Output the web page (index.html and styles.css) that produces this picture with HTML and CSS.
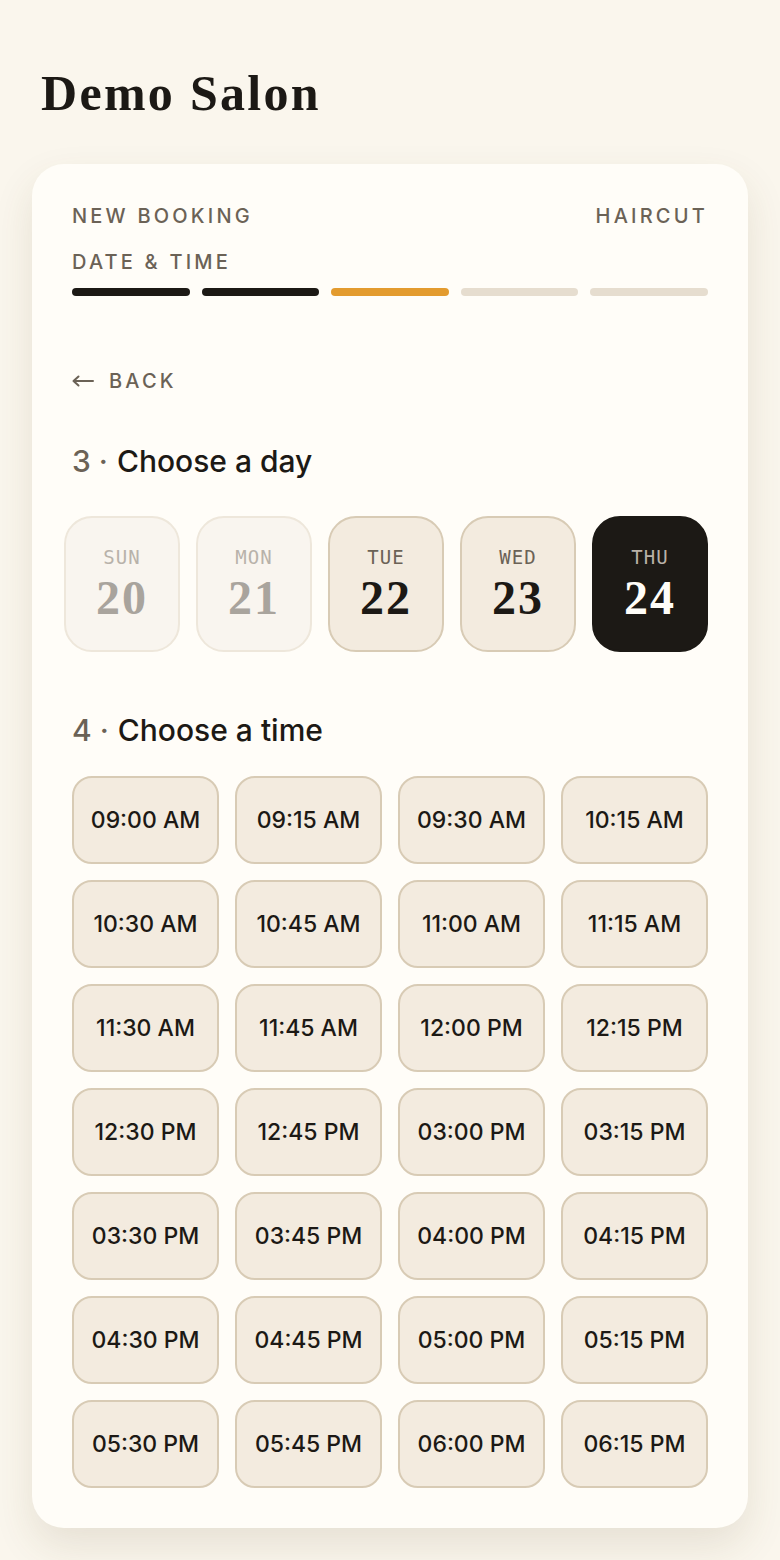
FILE: index.html
```html
<!DOCTYPE html>
<html lang="en">
<head>
    <meta charset="UTF-8">
    <meta name="viewport" content="width=device-width, initial-scale=1.0">
    <title>Demo Salon - Booking</title>
    <link rel="stylesheet" href="styles.css">
</head>
<body>
    <div class="page">
        <h1 class="salon-name">Demo Salon</h1>

        <div class="card">
            <div class="card-top">
                <span class="eyebrow">New booking</span>
                <span class="eyebrow">Haircut</span>
            </div>
            <div class="eyebrow step-title">Date &amp; time</div>
            <div class="progress">
                <span class="bar done"></span>
                <span class="bar done"></span>
                <span class="bar current"></span>
                <span class="bar"></span>
                <span class="bar"></span>
            </div>

            <a class="back-link" href="#">
                <svg class="arrow" width="22" height="12" viewBox="0 0 22 12" fill="none" stroke="currentColor" stroke-width="2" stroke-linecap="round" stroke-linejoin="round">
                    <path d="M21 6H1.5M6.5 1.5L1.5 6l5 4.5"/>
                </svg>
                <span>Back</span>
            </a>

            <h2 class="section-title"><span class="num">3 &middot;</span> Choose a day</h2>
            <div class="days">
                <button class="day disabled"><span class="dow">SUN</span><span class="date">20</span></button>
                <button class="day disabled"><span class="dow">MON</span><span class="date">21</span></button>
                <button class="day"><span class="dow">TUE</span><span class="date">22</span></button>
                <button class="day"><span class="dow">WED</span><span class="date">23</span></button>
                <button class="day selected"><span class="dow">THU</span><span class="date">24</span></button>
            </div>

            <h2 class="section-title time-title"><span class="num">4 &middot;</span> Choose a time</h2>
            <div class="times">
                <button class="slot">09:00 AM</button>
                <button class="slot">09:15 AM</button>
                <button class="slot">09:30 AM</button>
                <button class="slot">10:15 AM</button>
                <button class="slot">10:30 AM</button>
                <button class="slot">10:45 AM</button>
                <button class="slot">11:00 AM</button>
                <button class="slot">11:15 AM</button>
                <button class="slot">11:30 AM</button>
                <button class="slot">11:45 AM</button>
                <button class="slot">12:00 PM</button>
                <button class="slot">12:15 PM</button>
                <button class="slot">12:30 PM</button>
                <button class="slot">12:45 PM</button>
                <button class="slot">03:00 PM</button>
                <button class="slot">03:15 PM</button>
                <button class="slot">03:30 PM</button>
                <button class="slot">03:45 PM</button>
                <button class="slot">04:00 PM</button>
                <button class="slot">04:15 PM</button>
                <button class="slot">04:30 PM</button>
                <button class="slot">04:45 PM</button>
                <button class="slot">05:00 PM</button>
                <button class="slot">05:15 PM</button>
                <button class="slot">05:30 PM</button>
                <button class="slot">05:45 PM</button>
                <button class="slot">06:00 PM</button>
                <button class="slot">06:15 PM</button>
            </div>
        </div>
    </div>
</body>
</html>
```

FILE: styles.css
```css
body {
    margin: 0;
    font-family: 'Inter', 'Noto Sans', sans-serif;
    background-color: #faf6ed;
    color: #1c1915;
}
.page {
    padding: 64px 32px 32px;
}
.salon-name {
    font-family: 'Liberation Serif', 'DejaVu Serif', serif;
    font-weight: 700;
    font-size: 50px;
    line-height: 58px;
    letter-spacing: 2.3px;
    margin: 0 0 42px;
    padding-left: 9px;
    color: #1c1915;
}
.card {
    background-color: #fffdf8;
    border-radius: 32px;
    padding: 40px;
    box-shadow: 0 18px 40px rgba(90, 70, 30, 0.12);
}
.card-top {
    display: flex;
    justify-content: space-between;
}
.eyebrow {
    font-size: 20px;
    line-height: 24px;
    font-weight: 500;
    letter-spacing: 0.16em;
    text-transform: uppercase;
    color: #6b6256;
}
.step-title {
    margin-top: 22px;
}
.progress {
    display: flex;
    gap: 12px;
    margin-top: 14px;
}
.bar {
    flex: 1;
    height: 8px;
    border-radius: 4px;
    background-color: #e6ddcf;
}
.bar.done {
    background-color: #1c1915;
}
.bar.current {
    background-color: #e39b2e;
}
.back-link {
    display: flex;
    align-items: center;
    gap: 15px;
    margin-top: 73px;
    font-size: 20px;
    line-height: 24px;
    font-weight: 500;
    letter-spacing: 0.16em;
    text-transform: uppercase;
    color: #6b6256;
    text-decoration: none;
}
.back-link .arrow {
    display: block;
}
.section-title {
    margin: 50px 0 0;
    font-size: 30px;
    line-height: 36px;
    font-weight: 500;
    color: #1c1915;
}
.section-title .num {
    color: #6b6256;
    margin-right: 1px;
}
.days {
    display: flex;
    gap: 16px;
    margin: 37px 0 0 -8px;
}
.day {
    width: 116px;
    height: 136px;
    border-radius: 28px;
    border: 2px solid #d8cbb5;
    background-color: #f3ebdf;
    display: flex;
    flex-direction: column;
    align-items: center;
    justify-content: center;
    gap: 5px;
    padding: 0;
    font-family: inherit;
    cursor: pointer;
}
.day .dow {
    font-family: 'DejaVu Sans Mono', 'Liberation Mono', monospace;
    font-size: 19px;
    line-height: 22px;
    letter-spacing: 0.06em;
    color: #6b6256;
}
.day .date {
    font-family: 'Liberation Serif', 'DejaVu Serif', serif;
    font-weight: 700;
    font-size: 48px;
    line-height: 50px;
    letter-spacing: 2px;
    color: #1c1915;
}
.day.disabled {
    background-color: #f9f5ef;
    border-color: #eee7db;
}
.day.disabled .dow {
    color: #b8b2aa;
}
.day.disabled .date {
    color: #a9a49d;
}
.day.selected {
    background-color: #1c1915;
    border-color: #1c1915;
}
.day.selected .dow {
    color: #b9b2a8;
}
.day.selected .date {
    color: #fffdf8;
}
.time-title {
    margin-top: 60px;
}
.times {
    display: grid;
    grid-template-columns: repeat(4, 1fr);
    gap: 16px;
    margin-top: 28px;
}
.slot {
    height: 88px;
    border-radius: 20px;
    border: 2px solid #d8cbb5;
    background-color: #f3ebdf;
    font-family: inherit;
    font-size: 23px;
    font-weight: 500;
    color: #1c1915;
    padding: 0;
    cursor: pointer;
}
```
